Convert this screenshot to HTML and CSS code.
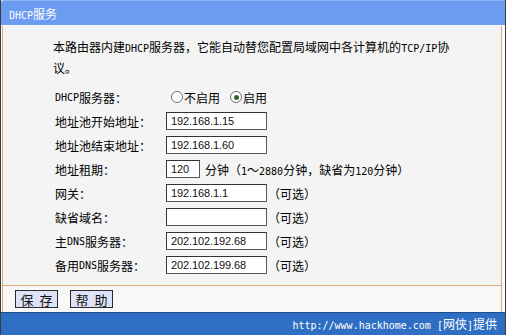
FILE: index.html
```html
<!DOCTYPE html>
<html lang="zh-CN">
<head>
<meta charset="utf-8">
<title>DHCP服务</title>
<link rel="stylesheet" href="styles.css">
</head>
<body>
<div class="window">
  <div class="titlebar"><span class="en">DHCP</span>服务</div>
  <div class="panel">
    <div class="content">
      <p class="intro">本路由器内建<span class="en">DHCP</span>服务器，它能自动替您配置局域网中各计算机的<span class="en">TCP/IP</span>协议。</p>
      <div class="form">
        <div class="label"><span class="en">DHCP</span>服务器：</div>
        <div class="field">
          <span class="radio"></span><span class="rtext">不启用</span>
          <span class="radio checked"></span><span class="rtext">启用</span>
        </div>

        <div class="label">地址池开始地址：</div>
        <div class="field"><span class="input">192.168.1.15</span></div>

        <div class="label">地址池结束地址：</div>
        <div class="field"><span class="input">192.168.1.60</span></div>

        <div class="label">地址租期：</div>
        <div class="field"><span class="input short">120</span><span class="note">分钟（<span class="en">1</span>～<span class="en">2880</span>分钟，缺省为<span class="en">120</span>分钟）</span></div>

        <div class="label">网关：</div>
        <div class="field"><span class="input">192.168.1.1</span><span class="opt">（可选）</span></div>

        <div class="label">缺省域名：</div>
        <div class="field"><span class="input"></span><span class="opt">（可选）</span></div>

        <div class="label">主<span class="en">DNS</span>服务器：</div>
        <div class="field"><span class="input">202.102.192.68</span><span class="opt">（可选）</span></div>

        <div class="label">备用<span class="en">DNS</span>服务器：</div>
        <div class="field"><span class="input">202.102.199.68</span><span class="opt">（可选）</span></div>
      </div>
    </div>
    <div class="actions">
      <button class="btn">保 存</button>
      <button class="btn">帮 助</button>
    </div>
  </div>
  <div class="footer"><span class="en">http://www.hackhome.com [</span>网侠<span class="en">]</span>提供</div>
</div>
</body>
</html>
```
FILE: styles.css
```css
html, body {
  margin: 0;
  padding: 0;
}
body {
  width: 506px;
  height: 335px;
  overflow: hidden;
  background: #ffffff;
  font-family: "Noto Sans CJK SC", "Noto Sans", sans-serif;
  font-size: 12px;
  color: #000;
}
.en {
  font-family: "DejaVu Sans Mono", "Liberation Mono", monospace;
  font-size: 10px;
}
.window {
  box-sizing: border-box;
  width: 506px;
  height: 335px;
  display: flex;
  flex-direction: column;
  border-left: 1px solid #3c3c3c;
  border-right: 1px solid #3c3c3c;
  background: #fbfbfb;
}
.titlebar {
  box-sizing: border-box;
  height: 26px;
  line-height: 25px;
  padding-left: 8px;
  background: #6b9cf0;
  border-top: 1px solid #8fb4f5;
  border-bottom: 1px solid #f4f6fb;
  border-top-left-radius: 3px;
  color: #ffffff;
  font-size: 12px;
}
.panel {
  margin: 0 3px 0 1px;
  border-left: 1px solid #d9ad78;
  border-right: 1px solid #d9ad78;
  display: flex;
  flex-direction: column;
  height: 286px;
}
.content {
  box-sizing: border-box;
  height: 260px;
  background: #f4f4f4;
  border-bottom: 1px solid #d9ad78;
  padding: 11px 0 0 0;
}
.intro {
  margin: 0;
  padding-left: 50px;
  width: 400px;
  line-height: 19px;
}
.form {
  margin-top: 8px;
  padding-left: 52px;
  display: grid;
  grid-template-columns: 111px auto;
  grid-auto-rows: 24px;
}
.label, .field {
  display: flex;
  align-items: center;
}
.radio {
  box-sizing: border-box;
  width: 12px;
  height: 12px;
  border-radius: 50%;
  border: 1px solid #6d6d6d;
  background: #ffffff;
  margin-left: 5px;
  margin-right: 1px;
  display: inline-flex;
  align-items: center;
  justify-content: center;
}
.radio.checked::after {
  content: "";
  width: 5px;
  height: 5px;
  border-radius: 50%;
  background: #3b5f3b;
}
.rtext + .radio {
  margin-left: 10px;
}
.input {
  box-sizing: border-box;
  width: 101px;
  height: 18px;
  border: 1px solid #333333;
  border-right-color: #555;
  border-bottom-color: #555;
  background: #ffffff;
  padding-left: 4px;
  font-family: "Liberation Sans", Arial, sans-serif;
  font-size: 11px;
  letter-spacing: -0.1px;
  line-height: 16px;
  color: #111;
}
.input.short {
  width: 34px;
}
.note {
  margin-left: 5px;
}
.opt {
  margin-left: 1px;
}
.actions {
  flex: 1;
  background: #f8f8f8;
  display: flex;
  align-items: flex-start;
  gap: 12px;
  padding: 4px 0 0 12px;
}
.btn {
  box-sizing: border-box;
  width: 43px;
  height: 18px;
  margin: 0;
  padding: 0;
  border: 1px solid #2a2a2a;
  background: #dde2f6;
  font-family: "Noto Sans CJK SC", sans-serif;
  font-size: 13px;
  line-height: 15px;
  word-spacing: 3px;
  color: #111;
}
.footer {
  box-sizing: border-box;
  height: 23px;
  background: #2e6fc3;
  border-top: 1px solid #1d4d8e;
  color: #ffffff;
  text-align: right;
  padding-right: 8px;
  line-height: 21px;
  font-size: 12px;
}
```
